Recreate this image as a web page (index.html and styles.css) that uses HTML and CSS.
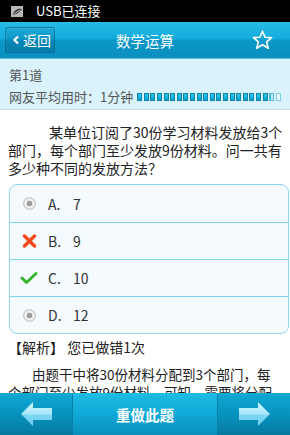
FILE: index.html
```html
<!DOCTYPE html>
<html lang="zh">
<head>
<meta charset="utf-8">
<title>数学运算</title>
<link rel="stylesheet" href="styles.css">
</head>
<body>
<div class="phone">
  <div class="status">
    <svg class="status-icon" width="12" height="11" viewBox="0 0 12 11">
      <rect x="0" y="0" width="12" height="11" fill="#b9b9b9"/>
      <path d="M2 9 C3 4 7 2 11 3 C9 5 7 8 2 9 Z" fill="#333"/>
      <path d="M3 8 L9 4" stroke="#ddd" stroke-width="0.8"/>
    </svg>
    <span class="status-text">USB已连接</span>
  </div>
  <div class="header">
    <div class="back">
      <svg width="8" height="10" viewBox="0 0 8 10"><polyline points="6,1.5 2.5,5 6,8.5" fill="none" stroke="#fff" stroke-width="2.2"/></svg>
      <span>返回</span>
    </div>
    <div class="title">数学运算</div>
    <svg class="star" width="21" height="20" viewBox="0 0 21 20">
      <polygon points="10.5,1.2 13.1,7.2 19.6,7.6 14.6,11.8 16.2,18.3 10.5,14.8 4.8,18.3 6.4,11.8 1.4,7.6 7.9,7.2" fill="none" stroke="#fff" stroke-width="1.6" stroke-linejoin="round"/>
    </svg>
  </div>
  <div class="info">
    <div class="info-line">第1道</div>
    <div class="info-line time">网友平均用时：1分钟
      <span class="bar">
        <i></i><i></i><i></i><i></i><i></i><i></i><i></i><i></i><i></i><i></i><i></i>
        <i></i><i></i><i></i><i></i><i></i><i></i><i></i><i></i><i></i><i class="half"></i><i class="empty"></i>
      </span>
    </div>
  </div>
  <div class="content">
    <p class="question">某单位订阅了30份学习材料发放给3个<br>部门，每个部门至少发放9份材料。问一共有<br>多少种不同的发放方法？</p>
    <div class="options">
      <div class="option">
        <span class="icon"><span class="radio"></span></span>
        <span class="letter">A.</span><span class="value">7</span>
      </div>
      <div class="option">
        <span class="icon">
          <svg width="15" height="14" viewBox="0 0 15 14"><path d="M2.5 2 L12.5 12 M12.5 2 L2.5 12" stroke="#f2471b" stroke-width="3.4" stroke-linecap="round"/></svg>
        </span>
        <span class="letter">B.</span><span class="value">9</span>
      </div>
      <div class="option">
        <span class="icon">
          <svg width="18" height="14" viewBox="0 0 18 14"><path d="M2 7 L6.5 11.5 L16 2.5" fill="none" stroke="#35b52a" stroke-width="3" stroke-linecap="round" stroke-linejoin="round"/></svg>
        </span>
        <span class="letter">C.</span><span class="value">10</span>
      </div>
      <div class="option">
        <span class="icon"><span class="radio"></span></span>
        <span class="letter">D.</span><span class="value">12</span>
      </div>
    </div>
    <p class="analysis-title">【解析】 您已做错1次</p>
    <p class="analysis">由题干中将30份材料分配到3个部门，每<br>个部门至少发放9份材料，可知，需要将分配后剩余的材料再分配。</p>
  </div>
  <div class="bottom">
    <div class="nav">
      <svg width="31" height="24" viewBox="0 0 31 24">
        <defs><linearGradient id="ga" x1="0" y1="0" x2="0" y2="1"><stop offset="0" stop-color="#d6f6ff"/><stop offset="0.5" stop-color="#a6e6fb"/><stop offset="0.55" stop-color="#7fd6f4"/><stop offset="1" stop-color="#6ccdf0"/></linearGradient></defs>
        <polygon points="0,12 12,0 12,6 31,6 31,18 12,18 12,24" fill="url(#ga)"/>
      </svg>
    </div>
    <div class="redo">重做此题</div>
    <div class="nav">
      <svg width="31" height="24" viewBox="0 0 31 24">
        <defs><linearGradient id="gb" x1="0" y1="0" x2="0" y2="1"><stop offset="0" stop-color="#d6f6ff"/><stop offset="0.5" stop-color="#a6e6fb"/><stop offset="0.55" stop-color="#7fd6f4"/><stop offset="1" stop-color="#6ccdf0"/></linearGradient></defs>
        <polygon points="31,12 19,0 19,6 0,6 0,18 19,18 19,24" fill="url(#gb)"/>
      </svg>
    </div>
  </div>
</div>
</body>
</html>
```

FILE: styles.css
```css
* { box-sizing: border-box; }
html, body { margin: 0; padding: 0; }
body {
  width: 290px;
  height: 435px;
  overflow: hidden;
  background: #fff;
  font-family: "Noto Sans CJK SC", "Noto Sans", sans-serif;
}
.phone {
  width: 290px;
  height: 435px;
  display: flex;
  flex-direction: column;
}
.status {
  height: 22px;
  flex: none;
  background: #000;
  display: flex;
  align-items: center;
  padding-left: 11px;
  gap: 13px;
}
.status-text {
  color: #fff;
  font-size: 13px;
  line-height: 22px;
}
.header {
  height: 37px;
  flex: none;
  display: grid;
  grid-template-columns: 1fr auto 1fr;
  align-items: center;
  padding: 0 17px 0 5px;
  background: linear-gradient(#27bbe6 0%, #14abdc 45%, #0a97c8 52%, #0a8fbe 100%);
  border-bottom: 1px solid #5fc4e4;
}
.back {
  width: 50px;
  height: 26px;
  display: flex;
  align-items: center;
  gap: 3px;
  padding-left: 6px;
  border: 1px solid rgba(0, 70, 100, 0.35);
  border-radius: 2px;
  background: linear-gradient(rgba(0, 90, 130, 0.12), rgba(0, 60, 100, 0.25));
  box-shadow: inset 0 1px 0 rgba(255,255,255,0.12);
  color: #fff;
  font-size: 14px;
}
.title {
  color: #fff;
  font-size: 14.5px;
  position: relative;
  left: 6px;
}
.star { justify-self: end; }
.info {
  height: 51px;
  flex: none;
  background: #d9f2fb;
  border-bottom: 1px solid #c5dde6;
  padding: 5px 0 0 9px;
  color: #555;
  font-size: 13px;
}
.info-line {
  line-height: 22px;
  display: flex;
  align-items: center;
}
.bar {
  display: flex;
  margin-left: 4px;
  gap: 1.6px;
}
.bar i {
  display: block;
  width: 5px;
  height: 8px;
  background: linear-gradient(#34c5ea, #0aa2d2);
  border: 1px solid #0b84ad;
}
.bar i.half {
  background: linear-gradient(90deg, #2ab8e0 50%, #bfeaf7 50%);
  border-color: #5bb8d6;
}
.bar i.empty {
  background: #e4f7fd;
  border-color: #7fcbe4;
}
.content {
  flex: 1;
  min-height: 0;
  overflow: hidden;
  padding: 13px 6px 0 8px;
  color: #222;
}
.question {
  margin: 0;
  font-size: 14px;
  line-height: 18px;
  text-indent: 41px;
}
.options {
  margin: 7px -5px 0 1px;
  border: 1px solid #8fd8f3;
  border-radius: 8px;
  background: #f4fafe;
}
.option {
  height: 37px;
  display: flex;
  align-items: center;
  padding-left: 10px;
  font-size: 14px;
  color: #333;
}
.option + .option { border-top: 1px solid #7fd0f0; }
.icon {
  width: 18px;
  height: 18px;
  display: flex;
  align-items: center;
  justify-content: center;
}
.radio {
  width: 13px;
  height: 13px;
  border-radius: 50%;
  background: radial-gradient(circle, #9a9a9a 0 2.5px, #e6e6e6 3px, #f4f4f4 4px, #cfcfcf 6.5px);
  border: 1px solid #c4c4c4;
}
.letter {
  margin-left: 10px;
  width: 25px;
}
.analysis-title {
  margin: 3px 0 0;
  font-size: 14px;
  line-height: 20px;
}
.analysis {
  margin: 8px 0 0;
  font-size: 13.5px;
  line-height: 18px;
  text-indent: 24px;
}
.bottom {
  height: 42px;
  flex: none;
  display: flex;
}
.nav {
  width: 72px;
  display: flex;
  align-items: center;
  justify-content: center;
  background: linear-gradient(#0ea9d4 0%, #0893bf 50%, #06799f 100%);
}
.redo {
  flex: 1;
  display: flex;
  align-items: center;
  justify-content: center;
  color: #fff;
  font-size: 14.5px;
  font-weight: bold;
  background: linear-gradient(#1cbde4 0%, #0fa8d6 50%, #0a8fbc 100%);
  border-left: 1px solid #067ea6;
  border-right: 1px solid #067ea6;
}
```
